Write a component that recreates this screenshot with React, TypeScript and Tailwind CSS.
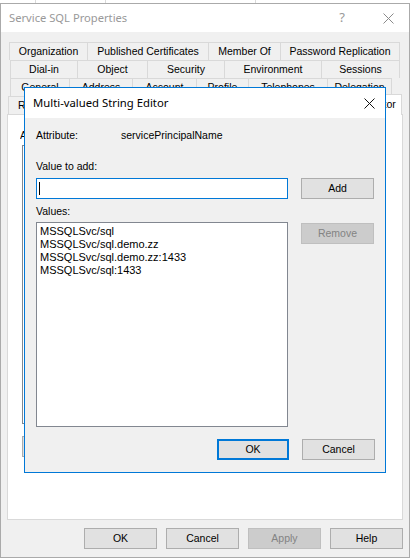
import React from 'react';

const rows: { ml: string; tabs: { label: string; w: string }[] }[] = [
  {
    ml: 'ml-[8px]',
    tabs: [
      { label: 'Organization', w: 'w-[78px]' },
      { label: 'Published Certificates', w: 'w-[121px]' },
      { label: 'Member Of', w: 'w-[72px]' },
      { label: 'Password Replication', w: 'w-[120px]' },
    ],
  },
  {
    ml: 'ml-[9px]',
    tabs: [
      { label: 'Dial-in', w: 'w-[67px]' },
      { label: 'Object', w: 'w-[70px]' },
      { label: 'Security', w: 'w-[77px]' },
      { label: 'Environment', w: 'w-[97px]' },
      { label: 'Sessions', w: 'w-[79px]' },
    ],
  },
  {
    ml: 'ml-[9px]',
    tabs: [
      { label: 'General', w: 'w-[59px]' },
      { label: 'Address', w: 'w-[63px]' },
      { label: 'Account', w: 'w-[64px]' },
      { label: 'Profile', w: 'w-[52px]' },
      { label: 'Telephones', w: 'w-[79px]' },
      { label: 'Delegation', w: 'w-[65px]' },
    ],
  },
];

const values = [
  'MSSQLSvc/sql',
  'MSSQLSvc/sql.demo.zz',
  'MSSQLSvc/sql.demo.zz:1433',
  'MSSQLSvc/sql:1433',
];

function CloseGlyph({ color }: { color: string }) {
  return (
    <svg width="11" height="11" viewBox="0 0 11 11">
      <path d="M0.5 0.5 L10.5 10.5 M10.5 0.5 L0.5 10.5" stroke={color} strokeWidth="1" fill="none" />
    </svg>
  );
}

function WinButton({
  label,
  disabled,
  isDefault,
  className = '',
}: {
  label: string;
  disabled?: boolean;
  isDefault?: boolean;
  className?: string;
}) {
  const base = 'flex h-[21px] items-center justify-center text-[10.5px]';
  if (disabled) {
    return (
      <div className={`${base} w-[73px] border border-[#bfbfbf] bg-[#cccccc] text-[#838383] ${className}`}>
        {label}
      </div>
    );
  }
  if (isDefault) {
    return (
      <div className={`${base} w-[72px] border-2 border-[#0078d7] bg-[#e1e1e1] ${className}`}>{label}</div>
    );
  }
  return (
    <div className={`${base} w-[73px] border border-[#adadad] bg-[#e1e1e1] ${className}`}>{label}</div>
  );
}

export default function App() {
  return (
    <div className="relative h-[559px] w-[410px] overflow-hidden bg-white font-['Liberation_Sans',Arial,sans-serif] text-black">
      {/* window behind */}
      <div className="flex h-[3px]">
        <div className="w-[36px] border-r border-[#dadada]" />
        <div className="w-[70px] border-r border-[#dadada]" />
        <div className="w-[150px] border-r border-[#dadada]" />
      </div>

      {/* Service SQL Properties */}
      <div className="flex h-[555px] flex-col border border-[#aaaaaa]">
        <div className="flex h-[28px] items-center bg-white pl-[8px] pr-[15px] font-['Noto_Sans',sans-serif] text-[11.2px] text-[#999999]">
          <span>Service SQL Properties</span>
          <div className="flex-1" />
          <span className="mr-[38px] text-[13px]">?</span>
          <CloseGlyph color="#8a8a8a" />
        </div>

        <div className="flex flex-1 flex-col bg-[#f0f0f0]">
          <div className="mt-[10px] flex flex-col">
            {rows.map((row, i) => (
              <div key={i} className={`flex h-[18px] ${row.ml}`}>
                {row.tabs.map((t, j) => (
                  <div
                    key={t.label}
                    className={`flex h-[18px] items-center justify-center border-l border-t border-[#d9d9d9] text-[10.5px] ${t.w} ${
                      j === row.tabs.length - 1 ? 'border-r' : ''
                    }`}
                  >
                    {t.label}
                  </div>
                ))}
              </div>
            ))}
            <div className="ml-[7px] flex h-[18px] items-end">
              <div className="flex h-[18px] w-[192px] items-center border-l border-t border-[#d9d9d9] pl-[9px] text-[10.5px]">
                <span className="w-[8px] overflow-hidden whitespace-nowrap">Remote Desktop Services Profile</span>
              </div>
              <div className="flex h-[18px] w-[120px] items-center justify-center border-l border-t border-[#d9d9d9] text-[10.5px]">
                COM+
              </div>
              <div className="relative z-10 -mb-px flex h-[21px] w-[82px] items-center justify-center border-x border-t border-[#d9d9d9] bg-white text-[10.5px]">
                Attribute Editor
              </div>
            </div>
          </div>

          {/* tab page */}
          <div className="ml-[6px] h-[406px] w-[396px] border border-[#d9d9d9] bg-white pl-[12px] pt-[14px] text-[10.5px]">
            <div className="h-[13px] w-[4px] overflow-hidden whitespace-nowrap leading-[13px]">Attributes:</div>
            <div className="ml-[2px] mt-[3px] h-[279px] w-[300px] border border-[#828790]" />
            <WinButton label="Edit" className="ml-[2px] mt-[12px]" />
          </div>

          <div className="mt-[8px] flex justify-end gap-[9px] pr-[6px]">
            <WinButton label="OK" />
            <WinButton label="Cancel" />
            <WinButton label="Apply" disabled />
            <WinButton label="Help" />
          </div>
        </div>
      </div>

      {/* Multi-valued String Editor dialog */}
      <div className="absolute left-[24px] top-[87px] z-20 flex h-[386px] w-[362px] flex-col border border-[#0078d7] bg-[#f0f0f0]">
        <div className="flex h-[30px] items-center justify-between bg-white pl-[8px] pr-[10px] font-['Noto_Sans',sans-serif] text-[11.3px]">
          <span>Multi-valued String Editor</span>
          <CloseGlyph color="#111111" />
        </div>

        <div className="flex flex-col pl-[11px] pr-[10px] text-[10.5px]">
          <div className="mt-[11px] flex h-[13px] leading-[13px]">
            <span className="w-[85px]">Attribute:</span>
            <span>servicePrincipalName</span>
          </div>

          <div className="mt-[18px] h-[13px] leading-[13px]">Value to add:</div>
          <div className="mt-[5px] flex gap-[13px]">
            <div className="flex h-[21px] w-[252px] items-center border border-[#0078d7] bg-white pl-[2px]">
              <div className="h-[13px] w-px bg-black" />
            </div>
            <WinButton label="Add" />
          </div>

          <div className="mt-[6px] h-[13px] leading-[13px]">Values:</div>
          <div className="mt-[4px] flex items-start gap-[13px]">
            <div className="h-[205px] w-[252px] border border-[#828790] bg-white pl-[3px] pt-[2px] text-[11px] leading-[13px]">
              {values.map((v) => (
                <div key={v}>{v}</div>
              ))}
            </div>
            <WinButton label="Remove" disabled className="mt-px" />
          </div>

          <div className="mt-[12px] flex justify-end gap-[13px]">
            <WinButton label="OK" isDefault />
            <WinButton label="Cancel" />
          </div>
        </div>
      </div>
    </div>
  );
}
